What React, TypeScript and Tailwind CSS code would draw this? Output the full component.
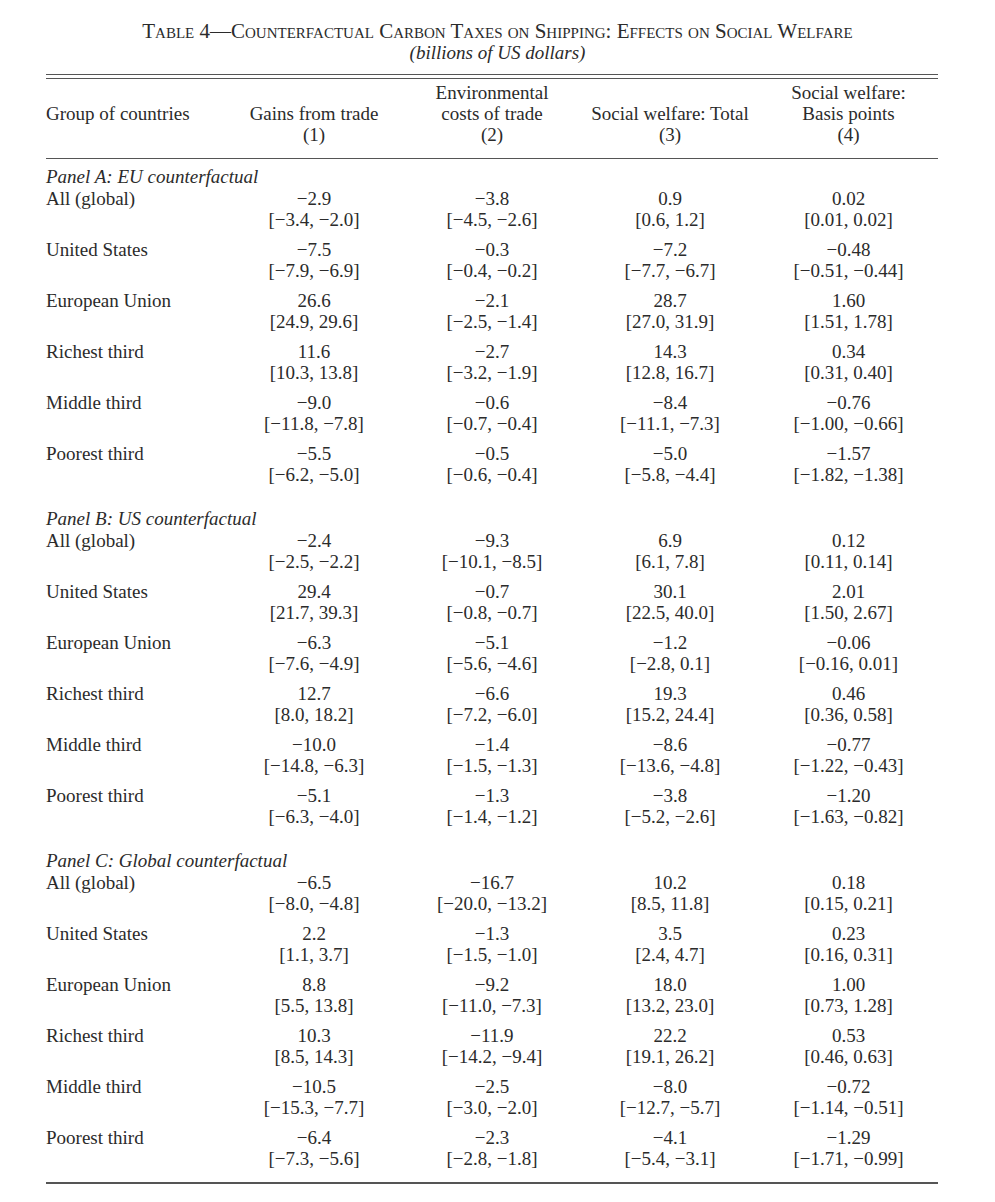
import React from "react";

type Cell = [string, string];
type Row = { label: string; cells: Cell[] };
type Panel = { title: string; rows: Row[] };

const panels: Panel[] = [
  {
    title: "Panel A: EU counterfactual",
    rows: [
      { label: "All (global)", cells: [["-2.9", "[-3.4, -2.0]"], ["-3.8", "[-4.5, -2.6]"], ["0.9", "[0.6, 1.2]"], ["0.02", "[0.01, 0.02]"]] },
      { label: "United States", cells: [["-7.5", "[-7.9, -6.9]"], ["-0.3", "[-0.4, -0.2]"], ["-7.2", "[-7.7, -6.7]"], ["-0.48", "[-0.51, -0.44]"]] },
      { label: "European Union", cells: [["26.6", "[24.9, 29.6]"], ["-2.1", "[-2.5, -1.4]"], ["28.7", "[27.0, 31.9]"], ["1.60", "[1.51, 1.78]"]] },
      { label: "Richest third", cells: [["11.6", "[10.3, 13.8]"], ["-2.7", "[-3.2, -1.9]"], ["14.3", "[12.8, 16.7]"], ["0.34", "[0.31, 0.40]"]] },
      { label: "Middle third", cells: [["-9.0", "[-11.8, -7.8]"], ["-0.6", "[-0.7, -0.4]"], ["-8.4", "[-11.1, -7.3]"], ["-0.76", "[-1.00, -0.66]"]] },
      { label: "Poorest third", cells: [["-5.5", "[-6.2, -5.0]"], ["-0.5", "[-0.6, -0.4]"], ["-5.0", "[-5.8, -4.4]"], ["-1.57", "[-1.82, -1.38]"]] },
    ],
  },
  {
    title: "Panel B: US counterfactual",
    rows: [
      { label: "All (global)", cells: [["-2.4", "[-2.5, -2.2]"], ["-9.3", "[-10.1, -8.5]"], ["6.9", "[6.1, 7.8]"], ["0.12", "[0.11, 0.14]"]] },
      { label: "United States", cells: [["29.4", "[21.7, 39.3]"], ["-0.7", "[-0.8, -0.7]"], ["30.1", "[22.5, 40.0]"], ["2.01", "[1.50, 2.67]"]] },
      { label: "European Union", cells: [["-6.3", "[-7.6, -4.9]"], ["-5.1", "[-5.6, -4.6]"], ["-1.2", "[-2.8, 0.1]"], ["-0.06", "[-0.16, 0.01]"]] },
      { label: "Richest third", cells: [["12.7", "[8.0, 18.2]"], ["-6.6", "[-7.2, -6.0]"], ["19.3", "[15.2, 24.4]"], ["0.46", "[0.36, 0.58]"]] },
      { label: "Middle third", cells: [["-10.0", "[-14.8, -6.3]"], ["-1.4", "[-1.5, -1.3]"], ["-8.6", "[-13.6, -4.8]"], ["-0.77", "[-1.22, -0.43]"]] },
      { label: "Poorest third", cells: [["-5.1", "[-6.3, -4.0]"], ["-1.3", "[-1.4, -1.2]"], ["-3.8", "[-5.2, -2.6]"], ["-1.20", "[-1.63, -0.82]"]] },
    ],
  },
  {
    title: "Panel C: Global counterfactual",
    rows: [
      { label: "All (global)", cells: [["-6.5", "[-8.0, -4.8]"], ["-16.7", "[-20.0, -13.2]"], ["10.2", "[8.5, 11.8]"], ["0.18", "[0.15, 0.21]"]] },
      { label: "United States", cells: [["2.2", "[1.1, 3.7]"], ["-1.3", "[-1.5, -1.0]"], ["3.5", "[2.4, 4.7]"], ["0.23", "[0.16, 0.31]"]] },
      { label: "European Union", cells: [["8.8", "[5.5, 13.8]"], ["-9.2", "[-11.0, -7.3]"], ["18.0", "[13.2, 23.0]"], ["1.00", "[0.73, 1.28]"]] },
      { label: "Richest third", cells: [["10.3", "[8.5, 14.3]"], ["-11.9", "[-14.2, -9.4]"], ["22.2", "[19.1, 26.2]"], ["0.53", "[0.46, 0.63]"]] },
      { label: "Middle third", cells: [["-10.5", "[-15.3, -7.7]"], ["-2.5", "[-3.0, -2.0]"], ["-8.0", "[-12.7, -5.7]"], ["-0.72", "[-1.14, -0.51]"]] },
      { label: "Poorest third", cells: [["-6.4", "[-7.3, -5.6]"], ["-2.3", "[-2.8, -1.8]"], ["-4.1", "[-5.4, -3.1]"], ["-1.29", "[-1.71, -0.99]"]] },
    ],
  },
];

// use a real minus sign like the typeset table
const minus = (s: string) => s.replace(/-/g, "\u2212");

const grid = "grid grid-cols-[179px_178px_178px_178px_179px]";

const App = () => {
  return (
    <div className="w-[995px] min-h-[1202px] bg-white pt-[21px] text-[#2b2b2b] font-['Liberation_Serif',serif] text-[19px] leading-[21px]">
      {/* 表題 */}
      <div className="text-center text-[21px] leading-[21px] [font-variant:small-caps]">
        Table 4—Counterfactual Carbon Taxes on Shipping: Effects on Social Welfare
      </div>
      <div className="text-center text-[19px] leading-[21px] italic">(billions of US dollars)</div>

      <div className="mx-[46px] mt-[11px] w-[892px]">
        {/* 二重線 */}
        <div className="border-t border-b border-[#555] h-[5px]" />

        {/* 見出し */}
        <div className={`${grid} pt-[3px] pb-[13px] border-b-[1.5px] border-[#555]`}>
          <div className="flex flex-col justify-center">Group of countries</div>
          <div className="flex flex-col items-center justify-end">
            <span>Gains from trade</span>
            <span>(1)</span>
          </div>
          <div className="flex flex-col items-center">
            <span>Environmental</span>
            <span>costs of trade</span>
            <span>(2)</span>
          </div>
          <div className="flex flex-col items-center justify-end">
            <span>Social welfare: Total</span>
            <span>(3)</span>
          </div>
          <div className="flex flex-col items-center">
            <span>Social welfare:</span>
            <span>Basis points</span>
            <span>(4)</span>
          </div>
        </div>

        {/* パネル */}
        <div className="pt-[7px]">
          {panels.map((panel, pi) => (
            <div key={panel.title} className={pi > 0 ? "mt-[14px]" : ""}>
              <div className="italic mb-[1px]">{panel.title}</div>
              {panel.rows.map((row) => (
                <div key={row.label} className={`${grid} pb-[9px]`}>
                  <div>{row.label}</div>
                  {row.cells.map(([v, ci], i) => (
                    <div key={i} className="flex flex-col items-center">
                      <span>{minus(v)}</span>
                      <span>{minus(ci)}</span>
                    </div>
                  ))}
                </div>
              ))}
            </div>
          ))}
        </div>

        {/* 下の罫線 */}
        <div className="mt-[4px] border-t-2 border-[#555]" />
      </div>
    </div>
  );
};

export default App;
